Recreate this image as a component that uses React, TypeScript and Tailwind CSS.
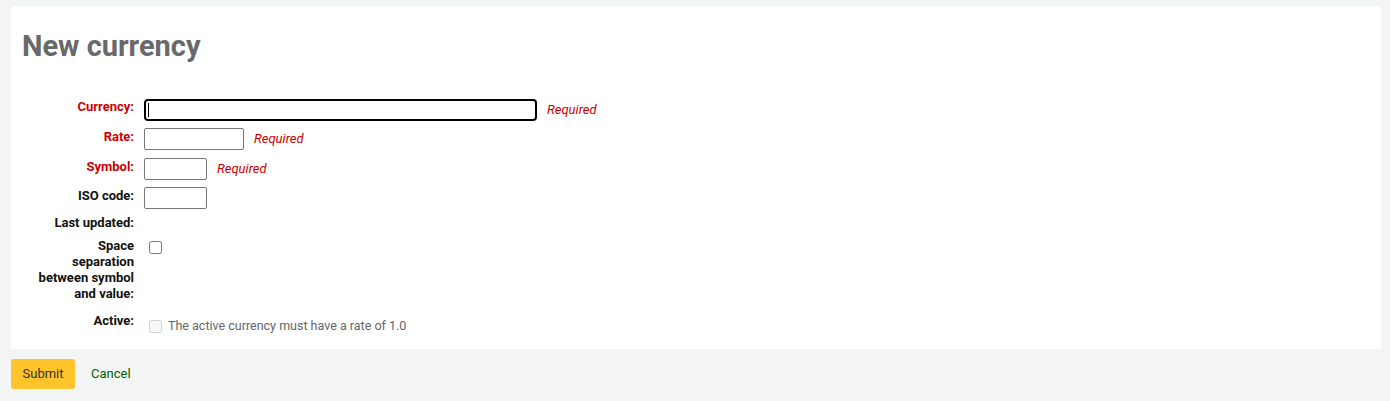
import React from "react";

const Required = () => (
  <span className="ml-[10px] text-[13px] italic leading-[22px] text-[#cc0000]">Required</span>
);

export default function App() {
  return (
    <div className="min-h-[401px] bg-[#f3f4f4] pt-[6px] pl-[11px] pr-[9px] font-['Roboto',sans-serif]">
      {/* Panel */}
      <div className="bg-white pl-[11px] pt-[24px] pb-[15px]">
        <h1 className="text-[29px] font-bold leading-[32px] text-[#696969]">New currency</h1>

        <div className="mt-[37px] flex flex-col text-[13px]">
          {/* Currency */}
          <div className="flex items-start">
            <label className="ml-[12px] mr-[10px] w-[100px] text-right font-bold leading-[16px] text-[#cc0000]">
              Currency:
            </label>
            <div className="relative">
              <input
                type="text"
                className="h-[22px] w-[393px] rounded-[4px] border-2 border-black outline-none"
              />
              <span className="absolute left-[4px] top-[4px] h-[14px] w-px bg-black" />
            </div>
            <Required />
          </div>

          {/* Rate */}
          <div className="mt-[7px] flex items-start">
            <label className="ml-[12px] mr-[10px] w-[100px] pt-[1px] text-right font-bold leading-[16px] text-[#cc0000]">
              Rate:
            </label>
            <input type="text" className="h-[22px] w-[100px] rounded-[2px] border border-[#767676]" />
            <Required />
          </div>

          {/* Symbol */}
          <div className="mt-[8px] flex items-start">
            <label className="ml-[12px] mr-[10px] w-[100px] pt-[1px] text-right font-bold leading-[16px] text-[#cc0000]">
              Symbol:
            </label>
            <input type="text" className="h-[22px] w-[63px] rounded-[2px] border border-[#767676]" />
            <Required />
          </div>

          {/* ISO code */}
          <div className="mt-[7px] flex items-start">
            <label className="ml-[12px] mr-[10px] w-[100px] pt-[1px] text-right font-bold leading-[16px] text-[#111]">
              ISO code:
            </label>
            <input type="text" className="h-[22px] w-[63px] rounded-[2px] border border-[#767676]" />
          </div>

          {/* Last updated */}
          <div className="mt-[6px] flex items-start">
            <label className="ml-[12px] mr-[10px] w-[100px] text-right font-bold leading-[16px] text-[#111]">
              Last updated:
            </label>
          </div>

          {/* Space separation */}
          <div className="mt-[7px] flex items-start">
            <label className="ml-[12px] mr-[10px] w-[100px] text-right font-bold leading-[16px] text-[#111]">
              Space separation between symbol and value:
            </label>
            <input type="checkbox" className="ml-[5px] mt-[3px] h-[13px] w-[13px]" />
          </div>

          {/* Active */}
          <div className="mt-[11px] flex items-start">
            <label className="ml-[12px] mr-[10px] w-[100px] text-right font-bold leading-[16px] text-[#111]">
              Active:
            </label>
            <div className="flex items-center pt-[5px]">
              <input type="checkbox" disabled className="ml-[5px] h-[13px] w-[13px]" />
              <span className="ml-[6px] text-[12.5px] leading-[16px] text-[#666]">
                The active currency must have a rate of 1.0
              </span>
            </div>
          </div>
        </div>
      </div>

      {/* Actions */}
      <div className="mt-[10px] flex items-center">
        <button className="h-[30px] w-[64px] rounded-[3px] bg-[#ffc32b] text-[13px] text-[#333]">Submit</button>
        <a href="#" className="ml-[16px] text-[13px] text-[#006100]">
          Cancel
        </a>
      </div>
    </div>
  );
}
